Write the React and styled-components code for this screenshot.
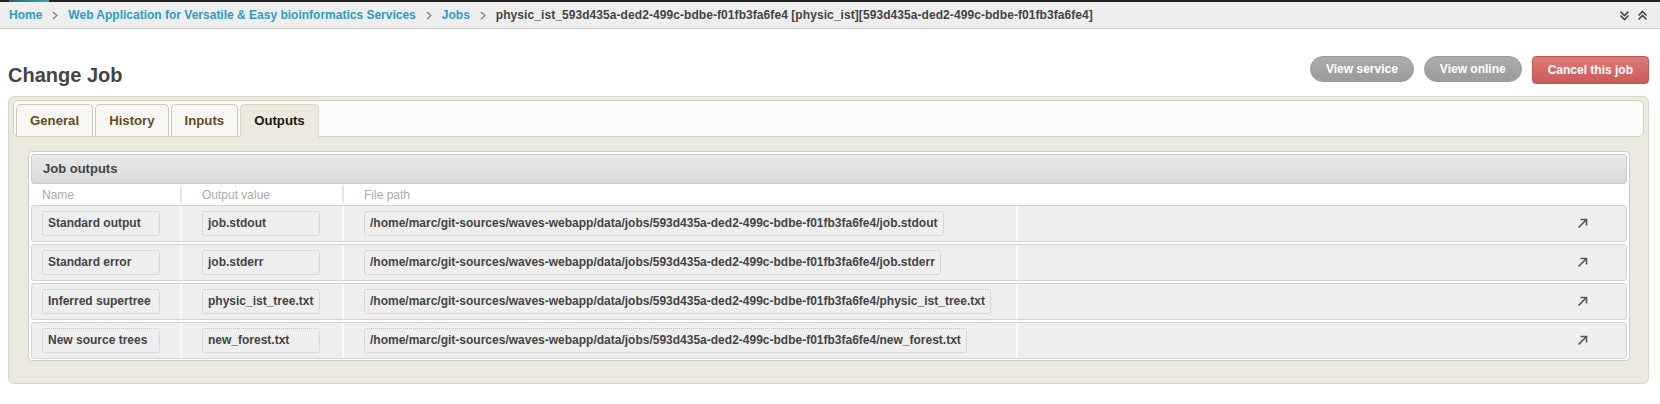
import React from 'react';
import styled, { createGlobalStyle } from 'styled-components';

const GlobalStyle = createGlobalStyle`
  * { box-sizing: border-box; }
  html, body { margin: 0; padding: 0; background: #fff; }
  body {
    font-family: "Liberation Sans", Arial, sans-serif;
    font-size: 12px;
    line-height: 16px;
    color: #444;
  }
`;

const TopStrip = styled.div`
  height: 2px;
  background: #222;
  padding-left: 9px;
`;

const LogoEdge = styled.div`
  width: 40px;
  height: 2px;
  background: linear-gradient(90deg, #1d6a80, #3c9fb6);
`;

const Breadcrumbs = styled.nav`
  display: flex;
  align-items: center;
  justify-content: space-between;
  height: 27px;
  padding: 0 12px 0 9px;
  background: #eee;
  border-bottom: 1px solid #ccc;
  font-weight: bold;
`;

const Trail = styled.ul`
  display: flex;
  align-items: center;
  margin: 0;
  padding: 0;
  list-style: none;
  white-space: nowrap;
`;

const Crumb = styled.li`
  display: flex;
  align-items: center;
  color: ${(p) => (p.$current ? '#444' : '#309bbf')};
  letter-spacing: ${(p) => (p.$current ? '0.07px' : '0')};
`;

const Chevron = styled.svg`
  margin: 0 10px;
  flex: none;
`;

const BarTools = styled.div`
  display: flex;
  align-items: center;
  gap: 7px;
`;

const TitleRow = styled.div`
  display: flex;
  justify-content: space-between;
  align-items: flex-start;
  padding: 27px 11px 0 8px;
`;

const Title = styled.h1`
  margin: 7px 0 0;
  font-size: 20px;
  line-height: 24px;
  font-weight: bold;
  color: #444;
`;

const Tools = styled.div`
  display: flex;
  align-items: flex-start;
  gap: 10px;
`;

const ToolButton = styled.a`
  display: block;
  padding: 0 15px;
  font-weight: bold;
  font-size: 12px;
  color: #fff;
  white-space: nowrap;
  cursor: pointer;
  ${(p) =>
    p.$danger
      ? `
    height: 28px;
    line-height: 26px;
    border: 1px solid #c65654;
    border-radius: 4px;
    background: linear-gradient(#df7b78, #c95b59);
  `
      : `
    height: 26px;
    line-height: 24px;
    border: 1px solid #999;
    border-radius: 13px;
    background: linear-gradient(#adadad, #9b9b9b);
  `}
`;

const TabsWidget = styled.div`
  margin: 9px 11px 0 8px;
  padding: 3px 4px;
  border: 1px solid #d9d6c4;
  border-radius: 6px;
  background: #eceadf;
`;

const TabBar = styled.ul`
  display: flex;
  align-items: flex-start;
  gap: 2px;
  margin: 0;
  padding: 3px 2px 0;
  list-style: none;
  border: 1px solid #d4d1bf;
  border-radius: 5px;
  background: #fbfbf9;
`;

const Tab = styled.li`
  display: flex;
  align-items: center;
  height: ${(p) => (p.$active ? '33px' : '32px')};
  margin-bottom: ${(p) => (p.$active ? '-1px' : '0')};
  padding: 0 13px;
  border: 1px solid ${(p) => (p.$active ? '#d9d6c4' : '#cbc7bd')};
  border-bottom: 0;
  border-radius: 5px 5px 0 0;
  background: ${(p) => (p.$active ? '#eceadf' : '#f8f7f4')};
  color: ${(p) => (p.$active ? '#1c160c' : '#654b24')};
  font-size: 13.2px;
  font-weight: bold;
  cursor: pointer;
`;

const TabPanel = styled.div`
  padding: 14px 14px 19px 15px;
`;

const Module = styled.div`
  padding: 2px 2px 1px;
  border: 1px solid #ccc;
  border-radius: 4px;
  background: #fff;
`;

const ModuleTitle = styled.h2`
  margin: 0;
  height: 30px;
  line-height: 28px;
  padding: 0 11px;
  border: 1px solid #ccc;
  border-radius: 3px;
  background: linear-gradient(#e9e9e9, #d9d9d9);
  font-size: 13px;
  font-weight: bold;
  color: #444;
`;

const columns = '148px 162px 674px 1fr';

const HeadRow = styled.div`
  display: grid;
  grid-template-columns: ${columns};
  height: 21px;
  padding-left: 1px;
  color: #aaa;
`;

const HeadCell = styled.div`
  display: flex;
  align-items: center;
  padding-left: ${(p) => (p.$plain ? '10px' : '20px')};
  border-left: ${(p) => (p.$plain ? '0' : '2px solid #e6e6e6')};
  margin: ${(p) => (p.$plain ? '0' : '2px 0')};
`;

const Rows = styled.div`
  display: flex;
  flex-direction: column;
  gap: 2px;
`;

const Row = styled.div`
  display: grid;
  grid-template-columns: ${columns};
  height: 37px;
  border: 1px solid #d4d4d4;
  border-radius: 3px;
  background: #eee;
`;

const Cell = styled.div`
  display: flex;
  align-items: center;
  justify-content: ${(p) => (p.$end ? 'flex-end' : 'flex-start')};
  padding: 0 ${(p) => (p.$end ? '38px' : '0')} 0 ${(p) => (p.$first ? '10px' : p.$end ? '0' : '20px')};
  border-left: ${(p) => (p.$first ? '0' : '2px solid #fafafa')};
`;

const ValueBox = styled.div`
  width: ${(p) => (p.$fixed ? '118px' : 'auto')};
  height: 25px;
  line-height: 23px;
  padding: 0 5px;
  border: 1px dotted #c2c2c2;
  border-radius: 3px;
  font-weight: bold;
  color: #444;
  white-space: nowrap;
  overflow: hidden;
`;

const LinkIcon = styled.svg`
  display: block;
  cursor: pointer;
`;

const basePath = '/home/marc/git-sources/waves-webapp/data/jobs/593d435a-ded2-499c-bdbe-f01fb3fa6fe4/';

const outputs = [
  { name: 'Standard output', value: 'job.stdout' },
  { name: 'Standard error', value: 'job.stderr' },
  { name: 'Inferred supertree', value: 'physic_ist_tree.txt' },
  { name: 'New source trees', value: 'new_forest.txt' },
];

const Sep = () => (
  <Chevron width="6" height="9" viewBox="0 0 6 9">
    <path d="M1 1 L5 4.5 L1 8" fill="none" stroke="#888" strokeWidth="1.5" />
  </Chevron>
);

const DoubleChevron = ({ up }) => (
  <svg width="11" height="11" viewBox="0 0 11 11">
    <path
      d={up ? 'M1.5 5.5 L5.5 1.5 L9.5 5.5 M1.5 9.5 L5.5 5.5 L9.5 9.5' : 'M1.5 1.5 L5.5 5.5 L9.5 1.5 M1.5 5.5 L5.5 9.5 L9.5 5.5'}
      fill="none"
      stroke="#444"
      strokeWidth="1.6"
    />
  </svg>
);

const Arrow = () => (
  <LinkIcon width="11" height="11" viewBox="0 0 11 11">
    <path d="M1.5 9.5 L9 2 M3.5 1.5 H9.5 V7.5" fill="none" stroke="#555" strokeWidth="1.6" />
  </LinkIcon>
);

export default function App() {
  const crumbs = ['Home', 'Web Application for Versatile & Easy bioinformatics Services', 'Jobs'];
  return (
    <>
      <GlobalStyle />
      <TopStrip>
        <LogoEdge />
      </TopStrip>
      <Breadcrumbs>
        <Trail>
          {crumbs.map((c) => (
            <Crumb key={c}>
              {c}
              <Sep />
            </Crumb>
          ))}
          <Crumb $current>
            physic_ist_593d435a-ded2-499c-bdbe-f01fb3fa6fe4 [physic_ist][593d435a-ded2-499c-bdbe-f01fb3fa6fe4]
          </Crumb>
        </Trail>
        <BarTools>
          <DoubleChevron />
          <DoubleChevron up />
        </BarTools>
      </Breadcrumbs>

      <TitleRow>
        <Title>Change Job</Title>
        <Tools>
          <ToolButton>View service</ToolButton>
          <ToolButton>View online</ToolButton>
          <ToolButton $danger>Cancel this job</ToolButton>
        </Tools>
      </TitleRow>

      <TabsWidget>
        <TabBar>
          <Tab>General</Tab>
          <Tab>History</Tab>
          <Tab>Inputs</Tab>
          <Tab $active>Outputs</Tab>
        </TabBar>
        <TabPanel>
          <Module>
            <ModuleTitle>Job outputs</ModuleTitle>
            <HeadRow>
              <HeadCell $plain>Name</HeadCell>
              <HeadCell>Output value</HeadCell>
              <HeadCell>File path</HeadCell>
              <HeadCell $plain />
            </HeadRow>
            <Rows>
              {outputs.map((o) => (
                <Row key={o.value}>
                  <Cell $first>
                    <ValueBox $fixed>{o.name}</ValueBox>
                  </Cell>
                  <Cell>
                    <ValueBox $fixed>{o.value}</ValueBox>
                  </Cell>
                  <Cell>
                    <ValueBox>{basePath + o.value}</ValueBox>
                  </Cell>
                  <Cell $end>
                    <Arrow />
                  </Cell>
                </Row>
              ))}
            </Rows>
          </Module>
        </TabPanel>
      </TabsWidget>
    </>
  );
}
